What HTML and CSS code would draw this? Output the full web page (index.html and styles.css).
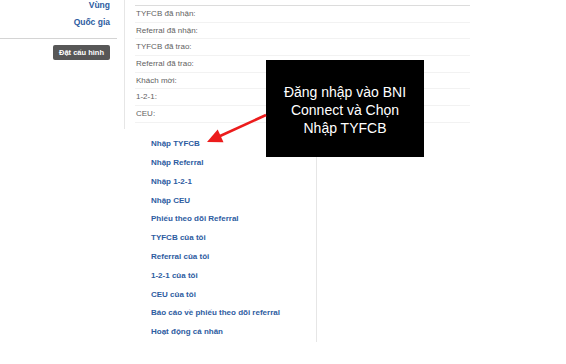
FILE: index.html
```html
<!DOCTYPE html>
<html>
    <head>
        <title>BNI Connect</title>
        <meta charset="UTF-8">
        <link rel="stylesheet" href="styles.css">
    </head>
    <body>
        <div class="page">
            <div class="sidebar">
                <div class="side-link">Vùng</div>
                <div class="side-link">Quốc gia</div>
                <div class="side-rule"></div>
                <div class="side-btn"><span class="btn">Đặt cấu hình</span></div>
            </div>
            <div class="main">
                <div class="stats">
                    <div class="stat">TYFCB đã nhận:</div>
                    <div class="stat">Referral đã nhận:</div>
                    <div class="stat">TYFCB đã trao:</div>
                    <div class="stat">Referral đã trao:</div>
                    <div class="stat">Khách mời:</div>
                    <div class="stat">1-2-1:</div>
                    <div class="stat">CEU:</div>
                </div>
                <div class="menu">
                    <a class="menu-link">Nhập TYFCB</a>
                    <a class="menu-link">Nhập Referral</a>
                    <a class="menu-link">Nhập 1-2-1</a>
                    <a class="menu-link">Nhập CEU</a>
                    <a class="menu-link">Phiếu theo dõi Referral</a>
                    <a class="menu-link">TYFCB của tôi</a>
                    <a class="menu-link">Referral của tôi</a>
                    <a class="menu-link">1-2-1 của tôi</a>
                    <a class="menu-link">CEU của tôi</a>
                    <a class="menu-link">Báo cáo về phiếu theo dõi referral</a>
                    <a class="menu-link">Hoạt động cá nhân</a>
                </div>
            </div>
        </div>

        <div class="callout">Đăng nhập vào BNI Connect và Chọn Nhập TYFCB</div>
        <svg class="arrow" width="70" height="40" viewBox="200 110 70 40">
            <line x1="266" y1="115" x2="219" y2="136.5" stroke="#ec1c1c" stroke-width="2.6"/>
            <polygon points="207,142 217.7,129.4 223.5,142.2" fill="#ec1c1c"/>
        </svg>
    </body>
</html>
```

FILE: styles.css
```css
body{
    margin: 0;
    background: #fff;
    font-family: "Liberation Sans", Arial, sans-serif;
}
.page{
    display: flex;
    align-items: flex-start;
}
.sidebar{
    width: 124px;
    height: 132px;
    border-right: 1px solid #e6e6e6;
    box-sizing: content-box;
    margin-top: -3px;
}
.side-link{
    text-align: right;
    padding-right: 14px;
    font-size: 8.5px;
    font-weight: bold;
    line-height: 17px;
    color: #2d5c9f;
}
.side-rule{
    width: 117px;
    border-top: 1px solid #d4d4d4;
    margin-top: 7px;
}
.side-btn{
    display: flex;
    justify-content: flex-end;
    padding-right: 14px;
    margin-top: 6px;
}
.btn{
    display: inline-block;
    background: #575757;
    color: #fff;
    font-size: 7.5px;
    font-weight: bold;
    line-height: 15px;
    padding: 0 6px;
    border-radius: 2px;
}
.main{
    padding-left: 10px;
    padding-top: 5px;
}
.stats{
    width: 335px;
    border-top: 1px solid #dcdcdc;
}
.stat{
    font-size: 8px;
    color: #5f5f5f;
    line-height: 15.67px;
    border-bottom: 1px solid #f2f2f2;
    padding-left: 1px;
}
.menu{
    width: 165px;
    padding: 12.5px 0 0 16px;
    border-right: 1px solid #e6e6e6;
    display: flex;
    flex-direction: column;
}
.menu-link{
    font-size: 8px;
    font-weight: bold;
    line-height: 18.8px;
    color: #2d5c9f;
}
.callout{
    position: absolute;
    left: 266px;
    top: 60px;
    width: 158px;
    height: 97px;
    background: #000;
    color: #fff;
    font-size: 14px;
    line-height: 18px;
    text-align: center;
    display: flex;
    align-items: center;
    justify-content: center;
    padding: 3px 8px 0;
    box-sizing: border-box;
}
.arrow{
    position: absolute;
    left: 200px;
    top: 110px;
}
```
